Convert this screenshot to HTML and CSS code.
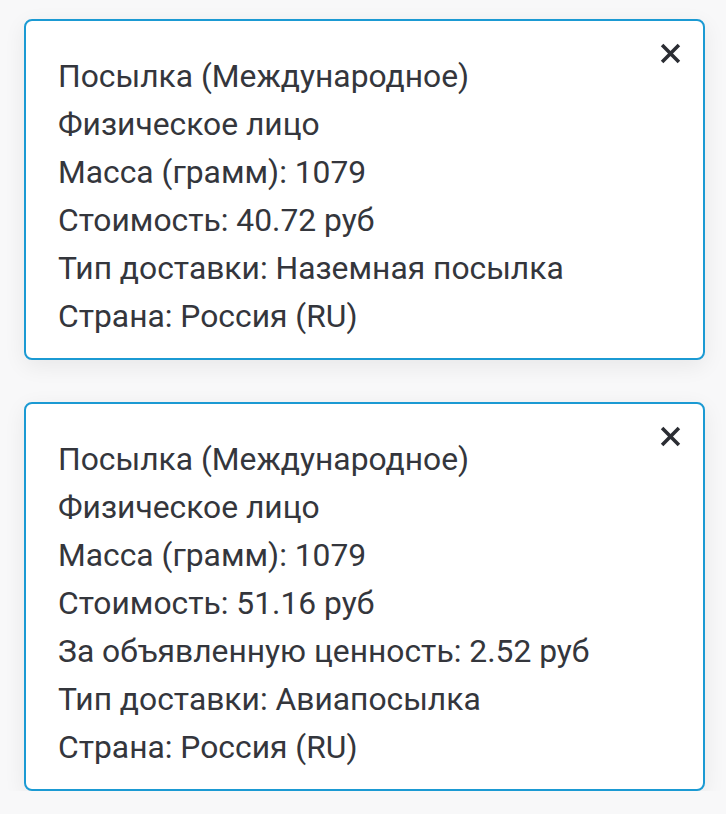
FILE: index.html
```html
<!DOCTYPE html>
<html lang="ru">
<head>
<meta charset="utf-8">
<link rel="stylesheet" href="styles.css">
</head>
<body>
<div class="list">
  <div class="card">
    <button class="close" aria-label="Закрыть">
      <svg viewBox="0 0 20 20" width="20" height="20"><path d="M2 2 L18 18 M18 2 L2 18" stroke="#2b2d33" stroke-width="3.4" stroke-linecap="butt" fill="none"/></svg>
    </button>
    <div class="line">Посылка (Международное)</div>
    <div class="line">Физическое лицо</div>
    <div class="line">Масса (грамм): 1079</div>
    <div class="line">Стоимость: 40.72 руб</div>
    <div class="line">Тип доставки: Наземная посылка</div>
    <div class="line">Страна: Россия (RU)</div>
  </div>
  <div class="card">
    <button class="close" aria-label="Закрыть">
      <svg viewBox="0 0 20 20" width="20" height="20"><path d="M2 2 L18 18 M18 2 L2 18" stroke="#2b2d33" stroke-width="3.4" stroke-linecap="butt" fill="none"/></svg>
    </button>
    <div class="line">Посылка (Международное)</div>
    <div class="line">Физическое лицо</div>
    <div class="line">Масса (грамм): 1079</div>
    <div class="line">Стоимость: 51.16 руб</div>
    <div class="line">За объявленную ценность: 2.52 руб</div>
    <div class="line">Тип доставки: Авиапосылка</div>
    <div class="line">Страна: Россия (RU)</div>
  </div>
</div>
</body>
</html>
```

FILE: styles.css
```css
html, body {
  margin: 0;
  padding: 0;
  background: #f8f8f9;
}
body {
  font-family: Roboto, "Noto Sans", sans-serif;
  color: #34363c;
}
.list {
  display: flex;
  flex-direction: column;
  gap: 42px;
  padding: 19px 21px 0 24px;
}
.card {
  position: relative;
  background: #ffffff;
  border: 2px solid #1b9ad3;
  border-radius: 8px;
  box-shadow: 0 6px 22px rgba(0, 0, 0, 0.07);
  padding: 31px 20px 18px 32px;
}
.line {
  font-size: 31.8px;
  line-height: 48px;
  height: 48px;
  white-space: nowrap;
}
.close {
  position: absolute;
  top: 22px;
  right: 22px;
  width: 21px;
  height: 21px;
  padding: 0;
  border: 0;
  background: none;
  cursor: pointer;
}
.close svg { display: block; width: 21px; height: 21px; }
```
